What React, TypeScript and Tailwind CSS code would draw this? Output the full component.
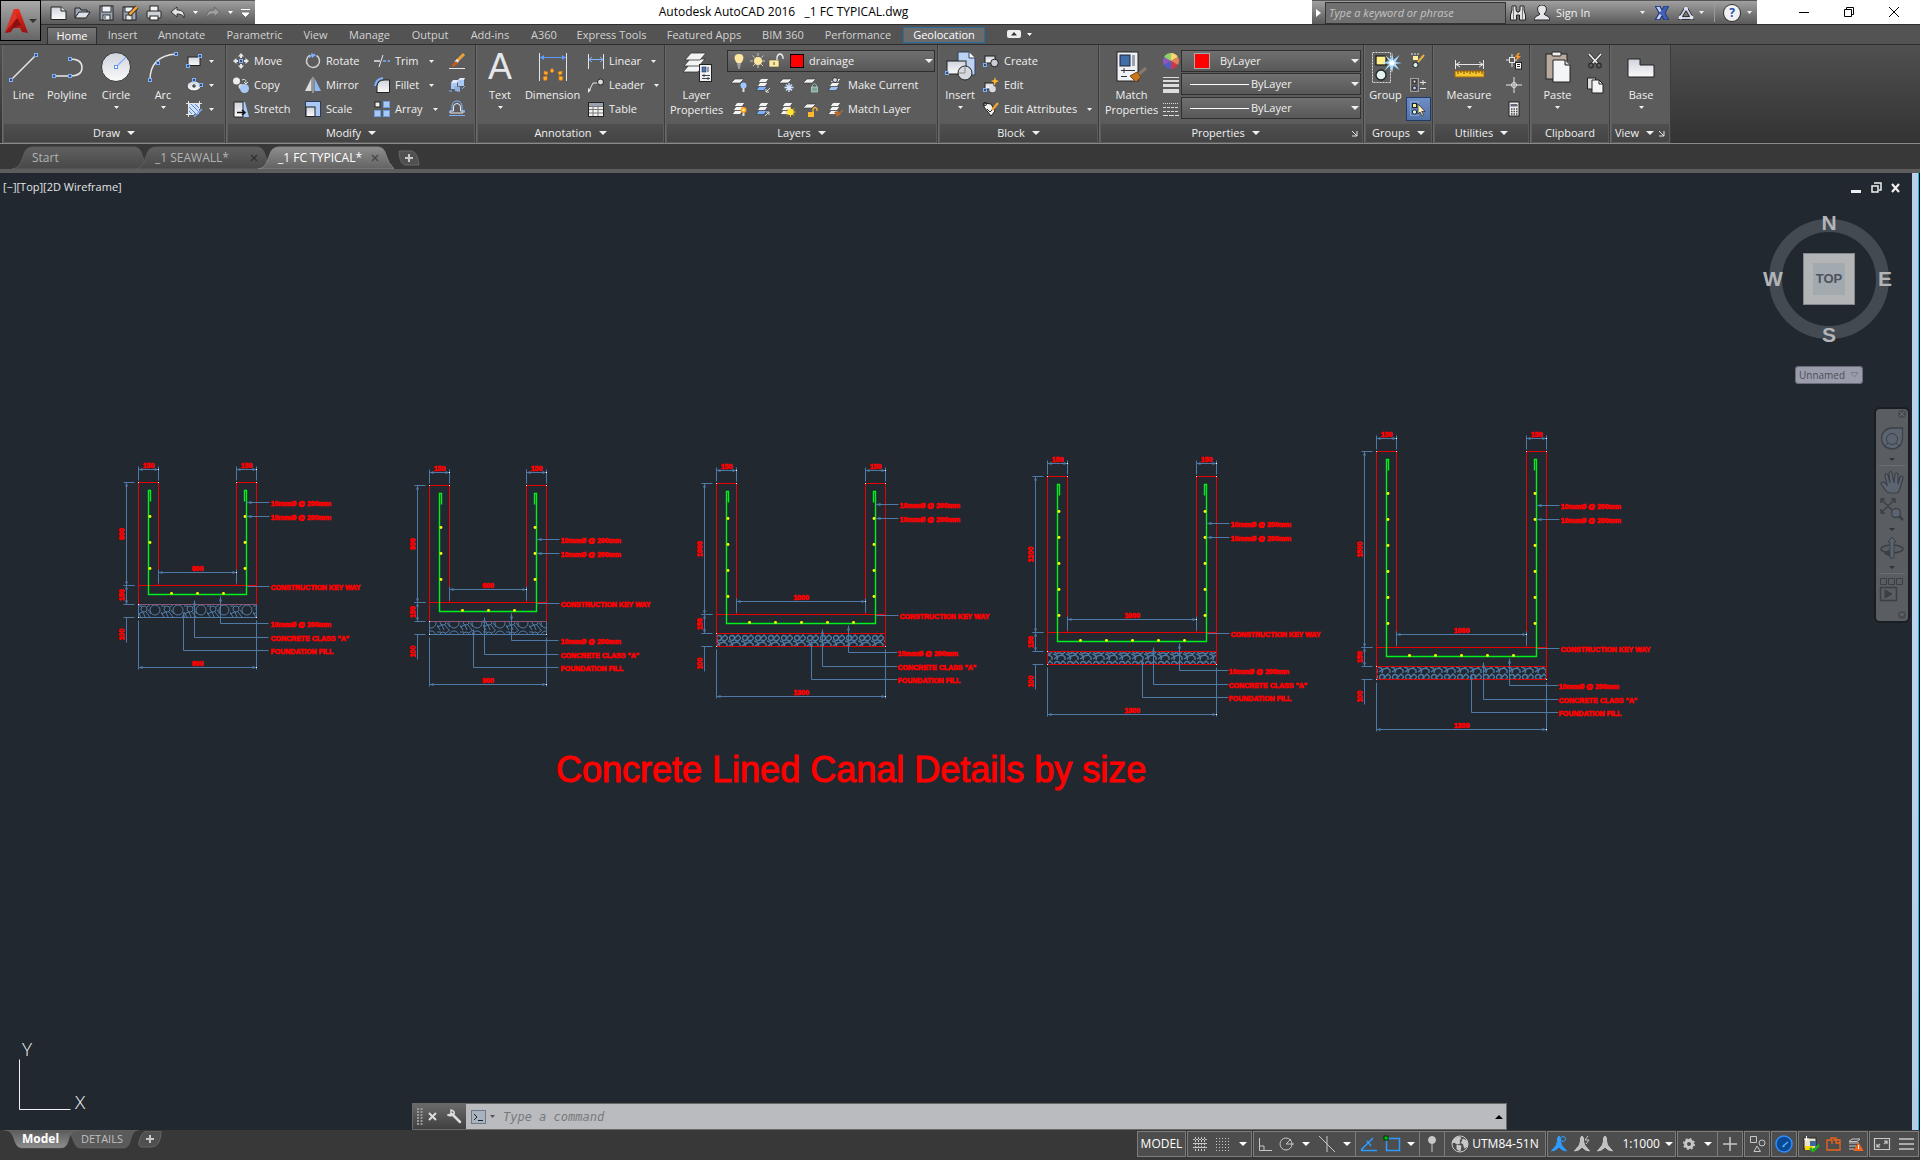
import type { ReactNode } from "react";

const LIGHT = "#e6e6e6";
const BLUE = "#7db0ff";
const DIM = "#4f7aa6";

function Caret({ className = "" }: { className?: string }) {
  return (
    <svg width="8" height="4" viewBox="0 0 8 4" className={`shrink-0 ${className}`} aria-hidden="true">
      <path d="M0 0h8L4 4z" fill="currentColor" />
    </svg>
  );
}

function SmallCaret({ className = "" }: { className?: string }) {
  return (
    <svg width="5" height="3" viewBox="0 0 5 3" className={`shrink-0 ${className}`} aria-hidden="true">
      <path d="M0 0h5L2.5 3z" fill="currentColor" />
    </svg>
  );
}

const Node = ({ x, y }: { x: number; y: number }) => (
  <rect x={x - 1.5} y={y - 1.5} width="3" height="3" fill="#3c4d66" stroke={BLUE} />
);

const Sheets = ({ fill = "#f2f2f2", last = fill }: { fill?: string; last?: string }) => (
  <g stroke="#333" strokeWidth="0.6">
    <path d="M4 9.5h8l-3 4H1z" fill={last} />
    <path d="M5 5.5h8l-3 4H2z" fill={fill} />
    <path d="M6 1.5h8l-3 4H3z" fill={fill} />
  </g>
);

const small: Record<string, ReactNode> = {
  rectangle: (
    <>
      <rect x="2" y="4" width="12" height="8.500" fill="url(#sheen)" stroke="#222" />
      <Node x={2} y={13} />
      <Node x={14} y={3} />
    </>
  ),
  ellipse: (
    <>
      <ellipse cx="8" cy="9" rx="7" ry="5" fill="url(#sheen)" stroke="#444" />
      <path d="M6 9h4M8 7v4" stroke="#222" />
      <Node x={8} y={3} />
      <Node x={15} y={8} />
    </>
  ),
  hatch: (
    <>
      <rect x="3" y="3" width="10" height="10" fill="#cfe0f8" />
      <path d="M3 6l7 7M3 10l3 3M5 3l8 8M9 3l4 4" stroke="#5a86c8" />
      <path d="M0 2.500h16M2.500 0v16M0 13.500h8M13.500 0v8" stroke={LIGHT} />
      <path d="M16 8L8 16" stroke={BLUE} strokeWidth="1.500" />
    </>
  ),
  move: (
    <>
      <path d="M8 0l3 3.500H9V5H7V3.500H5zM8 16l3-3.500H9V11H7v1.500H5zM0 8l3.500-3v2H5v2H3.500v2zM16 8l-3.500-3v2H11v2h1.500v2z" fill={LIGHT} />
      <Node x={8} y={8} />
    </>
  ),
  copy: (
    <>
      <circle cx="3.500" cy="4" r="3.500" fill="#eee" />
      <path d="M9 3c3-1.500 4 0 4 2.500M11 5l2 2 2-2" fill="none" stroke={LIGHT} />
      <circle cx="8" cy="9.500" r="2.500" fill="#ddd" />
      <circle cx="11.500" cy="11.500" r="4.500" fill="#a9c8f5" />
    </>
  ),
  stretch: (
    <>
      <path d="M9 1h3l4 15H9z" fill="#a9c8f5" />
      <path d="M1 1h9v15H1z" fill="url(#sheen)" stroke="#222" />
      <path d="M4 11.500h7M9 9l3 2.500L9 14" fill="none" stroke="#111" strokeWidth="1.500" />
    </>
  ),
  rotate: (
    <>
      <path d="M11.500 2.500A6.500 6.500 0 1 1 5 2.200" fill="none" stroke="#d0d0d0" strokeWidth="1.500" />
      <path d="M4 4.500A6 6 0 0 1 10 2" fill="none" stroke={BLUE} strokeWidth="1.500" />
      <path d="M6 0l5 2-4 3z" fill={BLUE} />
    </>
  ),
  mirror: (
    <>
      <path d="M6.500 1v13H0z" fill="#ddd" />
      <path d="M9.500 1v13H16z" fill="#8fb8f0" />
      <path d="M8 0v16" stroke="#ccc" />
    </>
  ),
  scale: (
    <>
      <rect x="0.500" y="0.500" width="15" height="15" fill="#a9c8f5" stroke="#2c3e5c" />
      <rect x="1" y="6" width="9" height="9.500" fill="url(#sheen)" stroke="#222" />
    </>
  ),
  trim: (
    <>
      <path d="M0 8h6" stroke={LIGHT} strokeWidth="1.500" />
      <path d="M9 8h7" stroke={BLUE} strokeWidth="1.500" strokeDasharray="3 1.500" />
      <path d="M9 2L5 14" stroke={LIGHT} />
    </>
  ),
  fillet: (
    <>
      <path d="M3 16V9q1-6 7-6h5.500v12.500H3z" fill="url(#sheen)" stroke="#222" />
      <path d="M1 9Q2 2 9 1" fill="none" stroke={BLUE} strokeWidth="2" />
    </>
  ),
  array: (
    <>
      <rect x="1" y="1" width="5" height="5" fill="#eee" stroke="#222" />
      {[[9, 0], [0, 9], [9, 9]].map(([x, y]) => (
        <rect key={`${x}-${y}`} x={x + 0.5} y={y + 0.5} width="6" height="6" fill="#a9c8f5" stroke="#6f9ee0" />
      ))}
    </>
  ),
  erase: (
    <>
      <path d="M15 1L8 8" stroke="#e9a33a" strokeWidth="3" />
      <path d="M9 7l-2.500 2.500" stroke="#eee" strokeWidth="3" />
      <path d="M7 8.500L3 12.500l1 1 4.500-3z" fill="#c8591c" stroke="#c8591c" />
      <path d="M0 15.500h16" stroke={LIGHT} />
    </>
  ),
  explode: (
    <>
      <path d="M2 6h6v6H2zM9 3h6v6H9z" fill="#a9c8f5" />
      <path d="M2 6l2-3h6L8 6zM9 3l2-2h5l-1 2z" fill="#dfe9f8" />
      <path d="M5 9l6 1v5l-5-1z" fill="#8db0e0" />
      <path d="M0 14h3M13 12l3-3" stroke={BLUE} />
    </>
  ),
  offset: (
    <>
      <path d="M5 9V5a3.500 3.500 0 0 1 7 0v4h2.500v2H1.500V9H5z" fill="none" stroke="#eee" transform="translate(-0.500 1)" />
      <path d="M0 14.500h16M1 11.500V9.500h2V5q.5-5 5-5t5 5v4.500h2.500v2" fill="none" stroke={BLUE} />
    </>
  ),
  linear: (
    <>
      <path d="M.5 1v15M15.500 1v15" stroke={LIGHT} />
      <path d="M1 6.500h14M4 4L1 6.500 4 9M12 4l3 2.500L12 9" fill="none" stroke={BLUE} />
    </>
  ),
  leader: (
    <>
      <path d="M1 14L5 6h5" fill="none" stroke={LIGHT} />
      <path d="M0 16V11l3 2z" fill={LIGHT} />
      <circle cx="12.500" cy="5" r="3" fill="#ddd" stroke="#222" />
    </>
  ),
  table: (
    <>
      <rect x="0.500" y="1.500" width="15" height="14" fill="#f0f0f0" stroke="#222" />
      <rect x="1" y="2" width="14" height="3" fill="#9aa2b0" />
      <path d="M1 5.500h14M1 8.500h14M1 12h14M5 5v10M10 5v10" stroke="#777" />
    </>
  ),
  layOff: (
    <>
      <path d="M4 2h9l-4 4H0z" fill="#f2f2f2" stroke="#333" strokeWidth=".6" />
      <circle cx="12.500" cy="8.500" r="3" fill="#9cc8ff" />
      <path d="M12.500 11v4" stroke="#ddd" strokeWidth="2" />
    </>
  ),
  layIso: (
    <>
      <Sheets last="#7db0ff" />
      <path d="M15 11l-4 4M11 12v3h3" stroke="#ddd" fill="none" />
    </>
  ),
  layFreeze: (
    <>
      <path d="M4 2h9l-4 4H0z" fill="#f2f2f2" stroke="#333" strokeWidth=".6" />
      <path d="M10 6v9M5.500 10.500h9M7 7.500l6 6M13 7.500l-6 6" stroke="#cfe4ff" strokeWidth="1.400" />
    </>
  ),
  layLock: (
    <>
      <path d="M4 2h9l-4 4H0z" fill="#f2f2f2" stroke="#333" strokeWidth=".6" />
      <rect x="8.500" y="10" width="6" height="5" fill="#7ba79e" stroke="#c6d9d5" strokeWidth=".7" />
      <path d="M9.500 10V8q2-3 4 0v2" fill="none" stroke="#8fb8b0" />
    </>
  ),
  layCurrent: (
    <>
      <Sheets last="#9cc2f5" />
      <circle cx="8" cy="3" r="2.500" fill="#ccd4e0" stroke="#333" />
    </>
  ),
  layOn: (
    <>
      <Sheets />
      <circle cx="12.500" cy="9" r="3" fill="#ffa41c" />
      <circle cx="12.500" cy="9" r="1.300" fill="#fff0b0" />
      <path d="M12.500 12v3" stroke="#ddd" strokeWidth="2" />
    </>
  ),
  layUniso: (
    <>
      <Sheets last="#7db0ff" />
      <path d="M10 15l4-4M11 11h3v3" stroke="#ddd" fill="none" />
    </>
  ),
  layThaw: (
    <>
      <Sheets />
      <path d="M11.500 6v10M6.500 11h10M8 7.500l7 7M15 7.500l-7 7" stroke="#ffc21a" />
      <circle cx="11.500" cy="11" r="3.200" fill="#ffe437" />
    </>
  ),
  layUnlock: (
    <>
      <path d="M4 3h9l-4 4H0z" fill="#f2f2f2" stroke="#333" strokeWidth=".6" />
      <rect x="5" y="11" width="6" height="5" fill="#ffb82e" />
      <path d="M10 11V8q2-3 4 0v2" fill="none" stroke="#ffb82e" strokeWidth="1.300" />
    </>
  ),
  layMatch: (
    <>
      <Sheets />
      <path d="M7 11l4-1 3 3-4 3z" fill="#b5692c" />
      <path d="M13 12l3-3" stroke="#8a6a50" strokeWidth="2" />
    </>
  ),
  blockCreate: (
    <>
      <rect x="2" y="3" width="10" height="7" fill="url(#sheen)" stroke="#222" />
      <circle cx="11.500" cy="10" r="3.800" fill="#c9ccd6" stroke="#222" />
      <Node x={2} y={12} />
    </>
  ),
  blockEdit: (
    <>
      <rect x="2" y="6" width="9" height="6" fill="url(#sheen)" stroke="#222" />
      <circle cx="9.500" cy="12" r="3.300" fill="#d9dbe2" />
      <path d="M12 0l1 3 3 1-3 1.500L11 9l0-3.500L8 4l3-1z" fill="#ffb42a" />
      <Node x={2} y={13} />
    </>
  ),
  blockAttr: (
    <>
      <path d="M1 2v4l7 9 4-5-4-7z" fill="#f1f1f1" stroke="#222" />
      <path d="M4 8l3 3 4-4" fill="none" stroke="#222" />
      <path d="M9 9l6-7" stroke="#e9a33a" strokeWidth="2.500" />
      <circle cx="2" cy="3" r="1.500" fill="none" stroke="#222" />
    </>
  ),
  wheel: (
    <>
      <path d="M8 8V0a8 8 0 0 1 6.900 4z" fill="#f5d76e" />
      <path d="M8 8l6.900-4a8 8 0 0 1 0 8z" fill="#e87f5a" />
      <path d="M8 8l6.900 4A8 8 0 0 1 8 16z" fill="#c9394a" />
      <path d="M8 8v8a8 8 0 0 1-6.900-4z" fill="#4a5fc9" />
      <path d="M8 8l-6.900 4a8 8 0 0 1 0-8z" fill="#8f57c0" />
      <path d="M8 8L1.100 4A8 8 0 0 1 8 0z" fill="#8fd06a" />
    </>
  ),
  weights: (
    <>
      <path d="M0 .5h16" stroke="#ddd" />
      <path d="M0 4h16" stroke="#ddd" strokeWidth="2" />
      <path d="M0 8.500h16" stroke="#ddd" strokeWidth="3" />
      <path d="M0 14h16" stroke="#ddd" strokeWidth="4" />
    </>
  ),
  linetypes: (
    <>
      <path d="M0 2.500h16" stroke="#ddd" strokeDasharray="1 1" />
      <path d="M0 6.500h16M0 10.500h16" stroke="#ddd" strokeDasharray="3 1" />
      <path d="M0 14.500h16" stroke="#ddd" strokeDasharray="5 1" />
    </>
  ),
  groupEdit: (
    <>
      <path d="M1 1h9" stroke={LIGHT} strokeDasharray="2 1" />
      <rect x="3" y="3" width="5" height="4" fill="#ffef9a" />
      <circle cx="5.500" cy="12" r="2.600" fill="#d9ecef" stroke="#222" />
      <path d="M8 9l6-7" stroke="#e9b13a" strokeWidth="2" />
    </>
  ),
  ungroup: (
    <>
      <rect x="0.500" y="1.500" width="8" height="13" fill="none" stroke={LIGHT} strokeDasharray="1 1" />
      <rect x="3" y="3" width="3" height="3" fill="#eee" stroke="#222" />
      <circle cx="4.500" cy="11" r="2" fill="#a9c8f5" stroke="#222" />
      <path d="M10 5.500h6M13 3v5M10 11.500h6" stroke={LIGHT} />
    </>
  ),
  groupSel: (
    <>
      <rect x="0.500" y="0.500" width="8" height="14" fill="none" stroke="#9fc4ff" strokeDasharray="1 1" />
      <rect x="2.500" y="2.500" width="4" height="4" fill="#ffef9a" stroke="#222" />
      <circle cx="4.500" cy="11" r="2.200" fill="#d9ecef" stroke="#222" />
      <path d="M8 3v10l2-2 2 4 1.500-1-1.800-3.500H15z" fill="#fff3b8" stroke="#222" strokeWidth=".7" />
    </>
  ),
  quickSel: (
    <>
      <path d="M0 7h11M6 1v13" stroke={LIGHT} />
      <rect x="3.500" y="4.500" width="5" height="5" fill="#5c5c5c" stroke={LIGHT} />
      <path d="M12 0l-3 4h2l-1 4 5-5h-3l2-3z" fill="#ff9a1c" />
      <rect x="9.500" y="9.500" width="6" height="6.500" fill="#fff" stroke="#222" />
      <path d="M11 11.500h3M11 13.500h3" stroke="#222" />
    </>
  ),
  point: (
    <>
      <path d="M0 8h16M8 0v16" stroke={LIGHT} />
      <circle cx="8" cy="8" r="2.500" fill="none" stroke={LIGHT} />
    </>
  ),
  calc: (
    <>
      <rect x="3" y="1" width="10" height="14" fill="#eee" stroke="#222" />
      <rect x="4.500" y="3" width="7" height="2.500" fill="#667" />
      <path d="M5 8h7M5 10.500h7M5 13h7" stroke="#444" strokeDasharray="1.500 1" strokeWidth="1.300" />
    </>
  ),
  cut: (
    <>
      <path d="M2 1l9 10M14 1L5 11" stroke="#222" strokeWidth="3" />
      <path d="M2 1l9 10M14 1L5 11" stroke="#eee" strokeWidth="1.800" />
      <circle cx="4" cy="12.500" r="2.300" fill="none" stroke="#2d2d2d" strokeWidth="1.300" />
      <circle cx="12" cy="12.500" r="2.300" fill="none" stroke="#2d2d2d" strokeWidth="1.300" />
    </>
  ),
  pages: (
    <>
      <path d="M.5 1h8v11h-8z" fill="#ddd" stroke="#222" />
      <path d="M5 3h7l4 4v9H5z" fill="#f4f4f4" stroke="#222" />
      <path d="M12 3v4h4" fill="none" stroke="#222" />
    </>
  ),
  new: (
    <>
      <path d="M1 2h10l5 4v8.500H1z" fill="url(#sheen)" stroke="#222" />
      <path d="M11 2v4h5" fill="#ddd" stroke="#222" />
    </>
  ),
  open: (
    <>
      <path d="M1 13V3h5l1 2h6v3" fill="#9aa4b5" stroke="#222" />
      <path d="M1 13l4-6h11l-4 6z" fill="#dde2ea" stroke="#222" />
    </>
  ),
  save: (
    <>
      <rect x="2" y="1" width="13" height="14" fill="#9aa6b8" stroke="#222" />
      <rect x="4" y="1" width="9" height="6" fill="#eef1f5" stroke="#333" />
      <rect x="5" y="10" width="7" height="5" fill="#eee" stroke="#333" />
      <path d="M7 11v3" stroke="#333" />
    </>
  ),
  saveAs: (
    <>
      <rect x="1" y="2" width="13" height="13" fill="#9aa6b8" stroke="#222" />
      <rect x="3" y="2" width="8" height="5" fill="#eef1f5" stroke="#333" />
      <rect x="4" y="10" width="6" height="5" fill="#eee" stroke="#333" />
      <path d="M7 10l8-8" stroke="#222" strokeWidth="4" />
      <path d="M7.500 9.500L15 2" stroke="#f2a23a" strokeWidth="2.500" />
    </>
  ),
  print: (
    <>
      <rect x="4" y="1" width="8" height="6" fill="#f4f4f4" stroke="#222" />
      <rect x="1" y="6" width="14" height="7" rx="1" fill="#cfd3da" stroke="#222" />
      <rect x="4" y="11" width="8" height="4" fill="#fff" stroke="#222" />
    </>
  ),
  undo: <path d="M7 2v3c5 0 8 2 7 8-1-3-3-4-7-4v3L1 7z" fill="#e4e4e4" stroke="#333" />,
  redo: <path d="M9 2v3c-5 0-8 2-7 8 1-3 3-4 7-4v3l6-5z" fill="#9c9c9c" stroke="#666" />,
};

const big: Record<string, ReactNode> = {
  line: (
    <>
      <path d="M3 29L28 4" stroke={LIGHT} strokeWidth="1.500" />
      <Node x={3} y={29} />
      <Node x={28} y={4} />
    </>
  ),
  polyline: (
    <>
      <path d="M3 25h16q12 0 12-8.500T19 8" fill="none" stroke={LIGHT} strokeWidth="1.500" />
      <Node x={3} y={25} />
      <Node x={19} y={25} />
      <Node x={19} y={8} />
    </>
  ),
  circle: (
    <>
      <circle cx="16" cy="16" r="14.500" fill="url(#sheen)" stroke="#333" />
      <path d="M16 16L26 6" stroke={BLUE} strokeWidth="1.300" />
      <rect x="14.500" y="14.500" width="3" height="3" fill="#fff" stroke="#5c93ee" />
    </>
  ),
  arc: (
    <>
      <path d="M3 29Q3 5 29 3" fill="none" stroke={LIGHT} strokeWidth="1.500" />
      <Node x={3} y={29} />
      <Node x={11} y={12} />
      <Node x={29} y={3} />
    </>
  ),
  dimension: (
    <>
      <path d="M2.500 2v28M29.500 2v28" stroke={LIGHT} />
      <path d="M3 6.500h26" stroke="#5c9cff" />
      <path d="M7 4L3 6.500 7 9zM25 4l4 2.500L25 9z" fill="#5c9cff" />
      <path d="M15 17l2 3-2 2-2-2zM7 20l4 1-1 3-3-1zM25 20l-4 1 1 3 3-1zM6 26l4-1v4l-3 .5zM26 26l-4-1v4l3 .5z" fill="#ffb12a" stroke="#e07310" strokeWidth=".6" />
    </>
  ),
  layers: (
    <>
      <g fill="#f4f4f4" stroke="#333" strokeWidth=".8">
        <path d="M8 14h15l-6 7H2z" />
        <path d="M9 8h15l-6 7H3z" />
        <path d="M10 2h15l-6 7H4z" />
      </g>
      <rect x="18.500" y="13.500" width="12" height="17" fill="#eef1f6" stroke="#222" />
      <rect x="21" y="16" width="4" height="5" fill="#4a78b8" stroke="#223" strokeWidth=".5" />
      <path d="M27 16v5M21 24.500h8M21 27.500h8M23 23v3M27 26v3" stroke="#444" />
    </>
  ),
  insert: (
    <>
      <path d="M14 1h11l6 6v17H14z" fill="#bcd2f2" stroke="#2c3e5c" />
      <path d="M25 1v6h6" fill="#fff" stroke="#2c3e5c" />
      <rect x="3" y="10" width="19" height="13" fill="url(#sheen)" stroke="#222" />
      <circle cx="21" cy="22" r="7" fill="#d6d8df" stroke="#222" />
      <path d="M15 22h6v-7" fill="none" stroke="#888" />
      <Node x={3} y={22} />
    </>
  ),
  match: (
    <>
      <rect x="1" y="1" width="21" height="29" fill="#eef1f6" stroke="#222" />
      <rect x="4" y="4" width="10" height="11" fill="#3f6da8" stroke="#223" />
      <rect x="16" y="4" width="3" height="11" fill="#9aa2b0" />
      <path d="M5 19.500h14M5 25.500h6M8 17v5" stroke="#333" />
      <path d="M14 25l7-4 4 5-5 5z" fill="#c7771e" stroke="#7a4412" />
      <path d="M23 23l7-6" stroke="#8a7a6c" strokeWidth="3" />
    </>
  ),
  group: (
    <>
      <rect x="2.500" y="1.500" width="18" height="30" fill="none" stroke="#ddd" strokeDasharray="2 1" />
      <rect x="6" y="5" width="10" height="9" fill="#ffef8a" stroke="#222" strokeWidth="1.300" />
      <circle cx="11" cy="24" r="5" fill="#e3f2f0" stroke="#222" strokeWidth="1.300" />
      <path d="M22 1l1.500 8 6-5-4 7 6.500 1-6.500 1 4 6-6-4-1.500 7-2-7-6 5 5-7-7-1 7-2-4-6 6 5z" fill="#a8dcff" />
      <circle cx="22" cy="12" r="2.500" fill="#fff" />
    </>
  ),
  measure: (
    <>
      <path d="M2.500 9v9M30.500 9v9M3 13.500h27M7 11l-4 2.500L7 16M26 11l4 2.500L26 16" fill="none" stroke={LIGHT} />
      <rect x="2" y="20" width="29" height="6" fill="#f5c62c" stroke="#a5650c" />
      <path d="M5 20v3M8 20v2M11 20v3M14 20v2M17 20v3M20 20v2M23 20v3M26 20v2M29 20v3" stroke="#7a4c08" />
    </>
  ),
  paste: (
    <>
      <rect x="4" y="3" width="21" height="25" fill="#b9aa9e" stroke="#222" />
      <rect x="10" y="1" width="9" height="4" rx="1" fill="#f0f0f0" stroke="#222" />
      <path d="M11 9h12l5 5v17H11z" fill="#f4f5f7" stroke="#222" />
      <path d="M23 9v5h5" fill="#ccc" stroke="#222" />
    </>
  ),
  base: <path d="M3 8h12v6h14v12H3z" fill="url(#sheen)" stroke="#222" />,
};

function Glyph({ name }: { name: string }) {
  return (
    <svg width="16" height="16" viewBox="0 0 16 16" className="shrink-0 overflow-visible" aria-hidden="true">
      {small[name]}
    </svg>
  );
}

function Tool({ icon, label, menu }: { icon: string; label?: string; menu?: boolean }) {
  return (
    <button type="button" aria-label={label ?? icon} className="flex h-6 items-center gap-[5px] whitespace-nowrap">
      <Glyph name={icon} />
      {label}
      {menu && <SmallCaret className={label ? "ml-[5px]" : "ml-[2px]"} />}
    </button>
  );
}

function BigTool({ icon, lines, menu, width }: { icon: string; lines: string[]; menu?: boolean; width: string }) {
  return (
    <button type="button" className={`flex shrink-0 flex-col items-center pt-[6px] leading-[15px] ${width}`}>
      {icon === "text" ? (
        <span className="mb-1 h-8 font-['Liberation_Sans',sans-serif] text-[36px] leading-8 text-gray-200">A</span>
      ) : (
        <svg width="32" height="32" viewBox="0 0 32 32" className="mb-1 shrink-0" aria-hidden="true">
          {big[icon]}
        </svg>
      )}
      {lines.map((line) => (
        <span key={line} className="whitespace-nowrap">
          {line}
        </span>
      ))}
      {menu && <SmallCaret className="mt-1" />}
    </button>
  );
}

function Panel({
  title,
  width,
  menu = true,
  launcher,
  children,
}: {
  title: string;
  width: string;
  menu?: boolean;
  launcher?: boolean;
  children: ReactNode;
}) {
  return (
    <section className={`flex shrink-0 flex-col border-r border-l border-r-[#3c3c3c] border-l-[#6a6a6a] bg-[#5c5c5c] ${width}`}>
      <div className="flex h-[79px]">{children}</div>
      <div
        className={`relative mx-px flex h-[18px] items-center justify-center gap-[7px] bg-linear-to-b from-[#4f4f4f] to-[#444] ${launcher ? "pr-3" : ""}`}
      >
        {title}
        {menu && <Caret />}
        {launcher && (
          <svg width="7" height="7" viewBox="0 0 7 7" className="absolute right-1 bottom-[5px]" aria-hidden="true">
            <path d="M1 1l5 5M6 1v5H1" fill="none" stroke={LIGHT} />
          </svg>
        )}
      </div>
    </section>
  );
}

function Combo({ label, value, kind }: { label: string; value: string; kind: "color" | "line" }) {
  return (
    <div className="relative flex h-[22px] w-[180px] items-center border border-[#2f2f2f] bg-linear-to-b from-[#707070] to-[#585858]">
      {kind === "color" ? (
        <span className="ml-3 h-4 w-4 shrink-0 border border-[#aaa] bg-[#ff0000]" />
      ) : (
        <span className="ml-2 h-px w-[59px] shrink-0 bg-white" />
      )}
      <select
        aria-label={label}
        className={`min-w-0 flex-1 appearance-none bg-transparent outline-none ${kind === "color" ? "pl-[10px]" : "pl-[2px]"}`}
      >
        <option>{value}</option>
      </select>
      <Caret className="absolute right-[1px]" />
    </div>
  );
}

const tabs = [
  ["Insert", "w-[49px]"],
  ["Annotate", "w-[69px]"],
  ["Parametric", "w-[77px]"],
  ["View", "w-[45px]"],
  ["Manage", "w-[63px]"],
  ["Output", "w-[58px]"],
  ["Add-ins", "w-[62px]"],
  ["A360", "w-[46px]"],
  ["Express Tools", "w-[89px]"],
  ["Featured Apps", "w-[96px]"],
  ["BIM 360", "w-[62px]"],
  ["Performance", "w-[88px]"],
];

function TitleBar() {
  return (
    <header className="flex h-6 shrink-0 bg-white">
      <div className="flex w-[255px] shrink-0 items-center border-t border-[#555] bg-linear-to-b from-[#a0a0a0] to-[#5a5a5a] pl-[50px] text-white">
        <div className="flex gap-2">
          {["new", "open", "save", "saveAs", "print", "undo"].map((name) => (
            <button key={name} type="button" aria-label={name}>
              <Glyph name={name} />
            </button>
          ))}
        </div>
        <SmallCaret className="ml-[7px]" />
        <button type="button" aria-label="redo" className="ml-[7px]">
          <Glyph name="redo" />
        </button>
        <SmallCaret className="ml-[7px]" />
        <svg width="9" height="8" viewBox="0 0 9 8" className="ml-[8px]" aria-hidden="true">
          <path d="M0 .5h9M1 4h7L4.500 7.500z" fill="#fff" stroke="#fff" />
        </svg>
      </div>
      <h1 className="flex-1 text-center text-[12px] leading-6 whitespace-pre text-black">
        Autodesk AutoCAD 2016{"   "}_1 FC TYPICAL.dwg
      </h1>
      <div className="flex w-[445px] shrink-0 items-center border-t border-[#555] bg-linear-to-b from-[#a0a0a0] to-[#5a5a5a]">
        <div className="flex h-full w-[13px] items-center justify-center">
          <svg width="5" height="8" viewBox="0 0 5 8" aria-hidden="true">
            <path d="M0 0v8l5-4z" fill="#fff" />
          </svg>
        </div>
        <input
          aria-label="Search"
          placeholder="Type a keyword or phrase"
          className="h-[22px] w-[181px] border border-[#333] bg-[#6f6f6f] px-[3px] italic outline-none placeholder:text-[#c4c4c4]"
        />
        <svg width="16" height="16" viewBox="0 0 16 16" className="ml-1" aria-hidden="true">
          <path d="M2 1h4v4l1 2h2l1-2V1h4v4l1.500 5v5H9.500v-5h-3v5H.5v-5L2 5z" fill="#e4e4e4" stroke="#222" />
          <path d="M3.500 2v12M12.500 2v12" stroke="#777" />
        </svg>
        <svg width="16" height="16" viewBox="0 0 16 16" className="ml-2" aria-hidden="true">
          <path d="M8 0c6 0 5 7 2 9 1 2 5 1 6 6H0c1-5 5-4 6-6C3 7 2 0 8 0z" fill="#e4e6ea" stroke="#222" />
        </svg>
        <a href="#signin" className="ml-[6px] w-[84px]">
          Sign In
        </a>
        <SmallCaret />
        <svg width="14" height="14" viewBox="0 0 14 14" className="ml-[10px]" aria-hidden="true">
          <path d="M0 0h5l2 4 2-4h5l-4 7 4 7H9l-2-4-2 4H0l4-7z" fill="#3f5fb8" stroke="#1c2a60" strokeWidth=".8" />
          <path d="M1.500 1h3l2 4-2 1zM1.500 13h3l2-4-2-1z" fill="#c6d4f4" />
        </svg>
        <svg width="16" height="14" viewBox="0 0 16 14" className="ml-[9px]" aria-hidden="true">
          <path d="M8 2L2 12h12z" fill="none" stroke="#222" strokeWidth="3.500" />
          <path d="M8 2L2 12h12z" fill="none" stroke="#c9d2e8" strokeWidth="2" />
          <circle cx="8" cy="2.500" r="2" fill="#dfe5f2" />
          <circle cx="2.500" cy="11.500" r="2" fill="#dfe5f2" />
          <circle cx="13.500" cy="11.500" r="2" fill="#dfe5f2" />
        </svg>
        <SmallCaret className="ml-[5px]" />
        <span className="ml-[10px] h-[18px] w-px bg-[#9a9a9a]" />
        <button
          type="button"
          aria-label="Help"
          className="ml-[9px] flex h-4 w-4 items-center justify-center rounded-full bg-[#f0f0f0] text-[12px] leading-4 font-bold text-[#1c4fb0] ring-1 ring-[#333]"
        >
          ?
        </button>
        <SmallCaret className="ml-[7px]" />
      </div>
      <div className="flex w-[163px] shrink-0 items-center text-black">
        {["M0 5.500h10", "M.5 2.500h7v7h-7zM2.500 2V.5h7v7h-2", "M0 0l10 10M10 0L0 10"].map((d) => (
          <button key={d} type="button" aria-label="window control" className="flex w-[45px] justify-center first:ml-6">
            <svg width="10" height="10" viewBox="0 0 10 10" aria-hidden="true">
              <path d={d} fill="none" stroke="#000" />
            </svg>
          </button>
        ))}
      </div>
    </header>
  );
}

function RibbonTabs() {
  return (
    <nav className="flex h-[21px] shrink-0 items-end border-t border-b border-t-[#2e2e2e] border-b-[#2e2e2e] bg-[#535353] pl-[47px] text-[#d2d2d2]">
      <a
        href="#home"
        className="mr-px flex h-[17px] w-[50px] items-center justify-center border border-b-0 border-[#2e2e2e] bg-linear-to-b from-[#767676] to-[#5c5c5c] pb-px text-white"
      >
        Home
      </a>
      {tabs.map(([name, width]) => (
        <a key={name} href="#tab" className={`flex h-[17px] items-center justify-center pb-px whitespace-nowrap ${width}`}>
          {name}
        </a>
      ))}
      <a
        href="#geo"
        className="mb-px ml-px flex h-4 w-[82px] items-center justify-center border border-[#2a6f9c] bg-[#6b6b6b] pb-px text-white"
      >
        Geolocation
      </a>
      <button type="button" aria-label="Minimize ribbon" className="mb-[6px] ml-[22px] flex items-center gap-[6px] text-white">
        <svg width="14" height="8" viewBox="0 0 14 8" aria-hidden="true">
          <rect width="14" height="8" rx="2" fill="#eee" />
          <path d="M7 2l3 3.500H4z" fill="#333" />
        </svg>
        <SmallCaret />
      </button>
    </nav>
  );
}

function LayerCombo() {
  return (
    <div className="relative mt-[5px] flex h-[22px] w-[208px] items-center border border-[#2f2f2f] bg-linear-to-b from-[#707070] to-[#585858] pl-[6px]">
      <svg width="10" height="16" viewBox="0 0 10 16" aria-hidden="true">
        <path d="M5 1c6 0 5 6 2 9H3C0 7-1 1 5 1z" fill="#ffe9a0" />
        <path d="M3 11h4M3.500 13h3M4 15h2" stroke="#ddd" />
      </svg>
      <svg width="16" height="16" viewBox="0 0 16 16" className="ml-[6px]" aria-hidden="true">
        <path d="M8 0v16M0 8h16M2.500 2.500l11 11M13.500 2.500l-11 11" stroke="#cfc7b2" strokeDasharray="3 1" />
        <circle cx="8" cy="8" r="4" fill="#ffe9a0" />
      </svg>
      <svg width="16" height="16" viewBox="0 0 16 16" className="ml-[2px]" aria-hidden="true">
        <rect x="1" y="7" width="10" height="7" fill="#ffe9a0" stroke="#554" strokeWidth=".6" />
        <path d="M9 7V4q1-3 3-3t3 3v2" fill="none" stroke="#eee" strokeWidth="1.300" />
        <path d="M6 9v3" stroke="#554" />
      </svg>
      <span className="ml-[6px] h-[14px] w-[14px] shrink-0 border border-black bg-[#ff0000]" />
      <select aria-label="Layer" className="ml-[5px] min-w-0 flex-1 appearance-none bg-transparent outline-none">
        <option>drainage</option>
      </select>
      <Caret className="absolute right-[1px]" />
    </div>
  );
}

function Ribbon() {
  return (
    <div className="flex h-[99px] shrink-0 border-b border-[#8a8a8a] bg-linear-to-b from-[#505050] to-[#333] pl-[2px] text-[#f0f0f0]">
      <Panel title="Draw" width="w-[224px]">
        <BigTool icon="line" lines={["Line"]} width="w-[41px]" />
        <BigTool icon="polyline" lines={["Polyline"]} width="w-[46px]" />
        <BigTool icon="circle" lines={["Circle"]} menu width="w-[52px]" />
        <BigTool icon="arc" lines={["Arc"]} menu width="w-[42px]" />
        <div className="ml-[2px] pt-1">
          {["rectangle", "ellipse", "hatch"].map((name) => (
            <Tool key={name} icon={name} menu />
          ))}
        </div>
      </Panel>
      <Panel title="Modify" width="w-[250px]">
        <div className="grid grid-cols-[72px_69px_75px_16px] content-start pt-1 pl-[6px]">
          <Tool icon="move" label="Move" />
          <Tool icon="rotate" label="Rotate" />
          <Tool icon="trim" label="Trim" menu />
          <Tool icon="erase" />
          <Tool icon="copy" label="Copy" />
          <Tool icon="mirror" label="Mirror" />
          <Tool icon="fillet" label="Fillet" menu />
          <Tool icon="explode" />
          <Tool icon="stretch" label="Stretch" />
          <Tool icon="scale" label="Scale" />
          <Tool icon="array" label="Array" menu />
          <Tool icon="offset" />
        </div>
      </Panel>
      <Panel title="Annotation" width="w-[189px]">
        <BigTool icon="text" lines={["Text"]} menu width="w-[46px]" />
        <BigTool icon="dimension" lines={["Dimension"]} width="w-[59px]" />
        <div className="ml-[6px] pt-1">
          <Tool icon="linear" label="Linear" menu />
          <Tool icon="leader" label="Leader" menu />
          <Tool icon="table" label="Table" />
        </div>
      </Panel>
      <Panel title="Layers" width="w-[273px]">
        <BigTool icon="layers" lines={["Layer", "Properties"]} width="w-[61px]" />
        <div>
          <LayerCombo />
          <div className="mt-px flex gap-2 pl-1">
            {["layOff", "layIso", "layFreeze", "layLock"].map((name) => (
              <Tool key={name} icon={name} />
            ))}
            <Tool icon="layCurrent" label="Make Current" />
          </div>
          <div className="flex gap-2 pl-1">
            {["layOn", "layUniso", "layThaw", "layUnlock"].map((name) => (
              <Tool key={name} icon={name} />
            ))}
            <Tool icon="layMatch" label="Match Layer" />
          </div>
        </div>
      </Panel>
      <Panel title="Block" width="w-[161px]">
        <BigTool icon="insert" lines={["Insert"]} menu width="w-[42px]" />
        <div className="ml-[2px] pt-1">
          <Tool icon="blockCreate" label="Create" />
          <Tool icon="blockEdit" label="Edit" />
          <Tool icon="blockAttr" label="Edit Attributes" menu />
        </div>
      </Panel>
      <Panel title="Properties" width="w-[265px]" launcher>
        <BigTool icon="match" lines={["Match", "Properties"]} width="w-[63px]" />
        <div className="pt-1">
          {["wheel", "weights", "linetypes"].map((name) => (
            <Tool key={name} icon={name} />
          ))}
        </div>
        <div className="ml-[2px] flex flex-col gap-px pt-[5px]">
          <Combo label="Object color" value="ByLayer" kind="color" />
          <Combo label="Lineweight" value="ByLayer" kind="line" />
          <div className="pt-px">
            <Combo label="Linetype" value="ByLayer" kind="line" />
          </div>
        </div>
      </Panel>
      <Panel title="Groups" width="w-[69px]">
        <BigTool icon="group" lines={["Group"]} width="w-[41px]" />
        <div className="pt-1">
          <div className="pl-1">
            <Tool icon="groupEdit" />
            <Tool icon="ungroup" />
          </div>
          <div className="border border-[#1f3a6b] bg-linear-to-b from-[#6f8fc4] to-[#5272a8] pr-1 pl-[3px]">
            <div className="-my-px">
              <Tool icon="groupSel" />
            </div>
          </div>
        </div>
      </Panel>
      <Panel title="Utilities" width="w-[97px]">
        <BigTool icon="measure" lines={["Measure"]} menu width="w-[70px]" />
        <div className="ml-[2px] pt-1">
          <Tool icon="quickSel" />
          <Tool icon="point" />
          <Tool icon="calc" />
        </div>
      </Panel>
      <Panel title="Clipboard" width="w-[80px]" menu={false}>
        <BigTool icon="paste" lines={["Paste"]} menu width="w-[53px]" />
        <div className="ml-[3px] pt-1">
          <Tool icon="cut" />
          <Tool icon="pages" />
        </div>
      </Panel>
      <Panel title="View" width="w-[61px]" launcher>
        <BigTool icon="base" lines={["Base"]} menu width="w-[60px]" />
      </Panel>
    </div>
  );
}

function FileTab({ name, width, active, closable }: { name: string; width: number; active?: boolean; closable?: boolean }) {
  const w = width + 14;
  return (
    <div className={`relative -mr-px flex h-[25px] items-center pt-[3px] ${active ? "z-10 text-white" : "text-[#b4b4b4]"}`} style={{ width }}>
      <svg width={w} height="25" className="absolute top-0 -left-3" aria-hidden="true">
        <path
          d={`M0 25C8 24 9 18 12 10Q14 3 21 3H${w - 16}Q${w - 10} 3 ${w - 8} 11T${w} 25z`}
          fill={active ? "url(#tabOn)" : "url(#tabOff)"}
          stroke={active ? "#868686" : "#5d5d5d"}
        />
      </svg>
      <a href="#file" className="relative flex-1 pl-2 text-[12px] whitespace-nowrap">
        {name}
      </a>
      {closable && (
        <button type="button" aria-label={`Close ${name}`} className="relative mr-[13px]">
          <svg width="8" height="8" viewBox="0 0 8 8" aria-hidden="true">
            <path d="M1 1l6 6M7 1L1 7" stroke={active ? "#484848" : "#343434"} strokeWidth="1.500" />
          </svg>
        </button>
      )}
    </div>
  );
}

type Canal = {
  x: number;
  right: number;
  top: number;
  floor: number;
  note: number;
  bar: number;
  height: string;
  span: string;
  total: string;
  leaders: number[];
  coarse?: boolean;
};

// y values run from the top of the model space
const canals: Canal[] = [
  { x: 138.5, right: 256.5, top: 309.5, floor: 412.5, note: 329.5, bar: 343.5, height: "800", span: "600", total: "900", leaders: [220.5, 194.5, 183.5], coarse: true },
  { x: 429.5, right: 546.5, top: 312.5, floor: 429.5, note: 366.5, bar: 354.5, height: "900", span: "600", total: "900", leaders: [511.5, 484.5, 473.5], coarse: true },
  { x: 716.5, right: 885.5, top: 310.5, floor: 441.5, note: 331.5, bar: 345.5, height: "1000", span: "1000", total: "1300", leaders: [848.5, 822.5, 811.5] },
  { x: 1047.5, right: 1216.5, top: 303.5, floor: 459.5, note: 350.5, bar: 338.5, height: "1200", span: "1000", total: "1300", leaders: [1179.5, 1153.5, 1142.5] },
  { x: 1376.5, right: 1546.5, top: 278.5, floor: 474.5, note: 332.5, bar: 320.5, height: "1500", span: "1000", total: "1300", leaders: [1509.5, 1483.5, 1471.5] },
];

// lettering is drawn with a heavy pen so it reads at this zoom
const PEN = { stroke: "#ff0000", strokeWidth: 0.6 };

function HDim({ x1, x2, y, tail, text }: { x1: number; x2: number; y: number; tail: number; text: string }) {
  return (
    <>
      <path d={`M${x1} ${y}H${x2}M${x1} ${y - 3}V${y + tail}M${x2} ${y - 3}V${y + tail}`} stroke={DIM} fill="none" />
      <path d={`M${x1} ${y}l4-1.500v3zM${x2} ${y}l-4-1.500v3z`} fill={DIM} />
      <text x={(x1 + x2) / 2} y={y - 2} textAnchor="middle" {...PEN}>
        {text}
      </text>
    </>
  );
}

function VDim({ x, y1, y2, text }: { x: number; y1: number; y2: number; text: string }) {
  const mid = (y1 + y2) / 2;
  return (
    <>
      <path d={`M${x} ${y1}V${y2}M${x - 3} ${y1}h11M${x - 3} ${y2}h11`} stroke={DIM} fill="none" />
      <path d={`M${x} ${y1}l-1.500 4h3zM${x} ${y2}l-1.500-4h3z`} fill={DIM} />
      <text transform={`translate(${x - 3} ${mid}) rotate(-90)`} textAnchor="middle" {...PEN}>
        {text}
      </text>
    </>
  );
}

function CanalSection({ c }: { c: Canal }) {
  const { x, right, top, floor } = c;
  const base = floor + 19;
  const fill = base + 13;
  const inL = x + 20;
  const inR = right - 20;
  const barL = x + 10;
  const barR = right - 10;
  const barY = floor + 9;
  const bars: number[] = [];
  for (let y = c.bar; y <= floor - 16; y += 26) bars.push(y);
  const floorBars: number[] = [];
  for (let bx = x + 33; bx < barR - 8; bx += 26) floorBars.push(bx);
  const notes = ["10mmØ @ 200mm", 'CONCRETE CLASS "A"', "FOUNDATION FILL"];
  const starts = [barY + 2, floor + 15, base + 8];
  const noteY = [floor + 38, floor + 52, floor + 65];

  return (
    <g fontSize="7" fontWeight="700" fill="#ff0000">
      <rect x={x} y={base} width={right - x} height="13" fill={c.coarse ? "url(#rubble)" : "url(#gravel)"} stroke={c.coarse ? DIM : "#e00000"} />
      <path
        d={`M${x} ${base}V${top}H${inL}V${floor}M${inR} ${floor}V${top}H${right}V${base}M${x} ${floor}H${right}`}
        fill="none"
        stroke="#e80000"
      />
      <path d={`M${x} ${base}H${right}`} stroke={c.coarse ? "#8a5577" : "#e00000"} />

      <path
        d={`M${barL + 2} ${top + 19}V${top + 8}H${barL}V${barY}H${barR}V${top + 8}H${barR - 2}V${top + 19}`}
        fill="none"
        stroke="#00f01c"
        strokeWidth="1.400"
      />
      {bars.map((y) => (
        <g key={y} fill="#ffff00">
          <circle cx={barL + 1.5} cy={y} r="1.400" />
          <circle cx={barR - 1.5} cy={y} r="1.400" />
        </g>
      ))}
      {floorBars.map((bx) => (
        <circle key={bx} cx={bx} cy={barY - 1} r="1.400" fill="#ffff00" />
      ))}

      <HDim x1={x} x2={inL} y={top - 13} tail={11} text="150" />
      <HDim x1={inR} x2={right} y={top - 13} tail={11} text="150" />
      <HDim x1={inL} x2={inR} y={floor - 13} tail={11} text={c.span} />
      <path d={`M${x} ${fill + 3}V${floor + 81}M${right} ${fill + 3}V${floor + 81}`} stroke={DIM} />
      <HDim x1={x} x2={right} y={floor + 82} tail={2} text={c.total} />
      <VDim x={x - 12} y1={top} y2={floor} text={c.height} />
      <VDim x={x - 12} y1={floor} y2={base} text="150" />
      <path d={`M${x - 15} ${fill}h11M${x - 12} ${fill}v25`} stroke={DIM} />
      <text transform={`translate(${x - 15} ${fill + 17}) rotate(-90)`} textAnchor="middle" {...PEN}>
        100
      </text>

      {[c.note, c.note + 14].map((y) => (
        <g key={y}>
          <path d={`M${barR} ${y}H${right + 13}`} stroke={DIM} />
          <path d={`M${barR} ${y}l5-1.500v3z`} fill={DIM} />
          <text x={right + 14} y={y + 3} {...PEN}>
            10mmØ @ 200mm
          </text>
        </g>
      ))}
      <path d={`M${barR} ${floor + 1}H${right + 13}`} stroke={DIM} />
      <text x={right + 14} y={floor + 4} {...PEN}>
        CONSTRUCTION KEY WAY
      </text>
      {notes.map((note, i) => (
        <g key={note}>
          <path d={`M${c.leaders[i]} ${starts[i]}V${noteY[i]}H${right + 12}`} fill="none" stroke={DIM} />
          <path d={`M${c.leaders[i]} ${starts[i]}l-1.500 5h3z`} fill={DIM} />
          <text x={right + (c.coarse ? 14 : 12)} y={noteY[i] + 3} {...PEN}>
            {note}
          </text>
        </g>
      ))}
      {[
        [x, top], [inL, top], [inR, top], [right, top], [x, fill], [right, fill], [x, base], [inL, top - 13], [right, top - 13], [inR, floor - 13], [right, floor + 82],
      ].map(([px, py]) => (
        <rect key={`${px}-${py}`} x={px - 0.5} y={py - 0.5} width="1" height="1" fill="#fff" />
      ))}
    </g>
  );
}

function ViewCube() {
  return (
    <svg width="136" height="136" viewBox="0 0 136 136" className="absolute top-[38px] right-[15px]" role="img" aria-label="View cube">
      <circle cx="68" cy="68" r="53.500" fill="none" stroke="#434a52" strokeWidth="13" />
      <rect x="42.500" y="42.500" width="51" height="51" fill="#b2b4b6" stroke="#85888b" />
      <rect x="52" y="52" width="32" height="32" fill="#a2a9af" />
      <g textAnchor="middle" style={{ fontWeight: 700 }}>
        <text x="68" y="72" fontSize="13" fill="#4c535b">
          TOP
        </text>
        <g fontSize="21" fill="#b3b5b8">
          <text x="68" y="19">N</text>
          <text x="68" y="131">S</text>
          <text x="12" y="75">W</text>
          <text x="124" y="75">E</text>
        </g>
      </g>
    </svg>
  );
}

function NavBar() {
  return (
    <div className="absolute top-[236px] right-[4px] rounded bg-[#5a5e62] ring-2 ring-[#191e24]">
      <svg width="32" height="212" viewBox="0 0 32 212" fill="none" stroke="#3b4046" aria-hidden="true">
        <circle cx="26" cy="5" r="4" fill="#484c51" stroke="none" />
        <path d="M24 3l4 4M28 3l-4 4" stroke="#666a6e" />
        <path d="M16 19h10.500v11A10.500 10.500 0 1 1 16 19z" fill="#5c6472" strokeWidth="1.300" />
        <circle cx="16" cy="30" r="5.500" />
        <path d="M12 34l-4 4M20 34l4 4" />
        <path d="M13 49h6l-3 3zM13 119h6l-3 3zM13 157h6l-3 3z" fill="#2f3439" stroke="none" />
        <path d="M3 56.500h26M3 164.500h26" stroke="#6b6f73" />
        <path d="M11 83L5 75q0-3 4-1l2 2-2-10q1-3 3 0l2 8-1-10q2-3 3 0l2 10 1-9q2-2 3 0v10l2-7q3-2 3 1l-3 10q-1 4-3 5H14z" fill="#5c6472" strokeWidth="1.200" />
        <path d="M5 90l14 14M19 90L5 104M5 94v-4h4M15 90h4v4M5 100v4h4" strokeWidth="1.500" />
        <circle cx="20" cy="104" r="4.500" fill="#5c6472" strokeWidth="1.300" />
        <path d="M23 107l4 4" strokeWidth="2.500" />
        <ellipse cx="16" cy="140" rx="11" ry="4" strokeWidth="1.500" />
        <path d="M14 149v-16h-2l4-5 4 5h-2v16z" fill="#5c6472" />
        <path d="M8 144l5-3v6z" fill="#3b4046" />
        <path d="M4.500 169.500h6v6h-6zM12.500 169.500h6v6h-6zM20.500 169.500h6v6h-6z" />
        <path d="M4.500 178.500h16v13h-16z" strokeWidth="1.500" />
        <path d="M9 181v8l7-4z" fill="#3b4046" />
        <circle cx="26" cy="206" r="4" fill="#484c51" stroke="none" />
        <path d="M24 205h4l-2 2z" stroke="#666a6e" />
      </svg>
    </div>
  );
}

function ModelSpace() {
  return (
    <main className="flex min-h-0 flex-1">
      <div className="relative min-w-0 flex-1 overflow-hidden bg-[#212830]">
        <svg className="absolute inset-0 h-full w-full font-['Liberation_Sans',sans-serif]" aria-label="Drawing">
          {canals.map((c) => (
            <CanalSection key={c.x} c={c} />
          ))}
          <text x="556" y="609" fontSize="36" fill="#ff0000" stroke="#ff0000" strokeWidth="1">
            Concrete Lined Canal Details by size
          </text>
        </svg>
        <p className="relative pt-[6px] pl-[3px] text-[#e4e4e4]">[−][Top][2D Wireframe]</p>
        <svg width="54" height="16" viewBox="0 0 54 16" className="absolute top-[7px] right-[10px]" aria-hidden="true">
          <path d="M3 10h10v3H3z" fill="#eee" />
          <path d="M26 3h7v7h-2M24 6h6v6h-6z" fill="none" stroke="#eee" strokeWidth="1.500" />
          <path d="M44 4l7 8M51 4l-7 8" stroke="#eee" strokeWidth="2.200" />
        </svg>
        <div className="font-['Liberation_Sans',sans-serif]">
          <ViewCube />
        </div>
        <button
          type="button"
          className="absolute top-[193px] right-[49px] flex h-[18px] w-[68px] items-center justify-between rounded bg-[#9a9cac] px-1 text-[10px] text-[#4d5059] ring-1 ring-[#6a6c7a] ring-inset"
        >
          Unnamed
          <svg width="9" height="6" viewBox="0 0 9 6" aria-hidden="true">
            <path d="M1 .5h7L4.500 5z" fill="none" stroke="#7b7d8b" />
          </svg>
        </button>
        <NavBar />
        <svg width="80" height="90" viewBox="0 0 80 90" className="absolute bottom-px left-3 overflow-visible" aria-label="UCS icon">
          <path d="M7.500 20.500v50h51" fill="none" stroke="#f0f0f0" />
          <g fill="#f0f0f0" fontSize="19" fontFamily="Open Sans" fontWeight="300" textAnchor="middle">
            <text x="15" y="17">Y</text>
            <text x="68" y="70">X</text>
          </g>
        </svg>
        <div className="absolute right-[405px] bottom-0 left-[412px] flex h-[27px] border border-[#6a6a6a] bg-[#babbbe]">
          <div className="flex w-[53px] shrink-0 items-center bg-linear-to-b from-[#6a6a6a] to-[#404040] pl-1">
            <svg width="6" height="18" viewBox="0 0 6 18" aria-hidden="true">
              <path d="M1 0v18M4.500 0v18" stroke="#999" strokeWidth="2" strokeDasharray="2 1" />
            </svg>
            <button type="button" aria-label="Close command line" className="ml-[5px]">
              <svg width="9" height="9" viewBox="0 0 9 9" aria-hidden="true">
                <path d="M1 1l7 7M8 1L1 8" stroke="#ddd" strokeWidth="2" />
              </svg>
            </button>
            <button type="button" aria-label="Customize" className="ml-[10px]">
              <svg width="15" height="15" viewBox="0 0 15 15" aria-hidden="true">
                <path d="M5 5l8 8" stroke="#ddd" strokeWidth="2.500" strokeLinecap="round" />
                <path d="M4 1q4 1 3 4-2 3-6 1l3-1z" fill="none" stroke="#ddd" strokeWidth="1.500" />
              </svg>
            </button>
          </div>
          <label htmlFor="command" className="flex items-center gap-1 pl-[5px] text-[#555]">
            <svg width="15" height="14" viewBox="0 0 15 14" aria-label="Command">
              <rect x=".5" y=".5" width="14" height="13" fill="#a9b2bf" stroke="#6f7885" />
              <path d="M3 4l3 3-3 3M7 10.500h5" fill="none" stroke="#222" />
            </svg>
            <SmallCaret />
          </label>
          <input
            id="command"
            placeholder="Type a command"
            className="min-w-0 flex-1 bg-transparent pl-[8px] font-['DejaVu_Sans_Mono','Liberation_Mono',monospace] text-[12px] italic outline-none placeholder:text-[#77797d]"
          />
          <Caret className="mt-[11px] mr-[3px] rotate-180 text-black" />
        </div>
      </div>
      <div className="w-[8px] shrink-0 border-r border-black bg-linear-to-b from-[#b9cfec] via-[#bcd2ee] to-[#b5cbe8]">
        <div className="ml-[6px] h-full w-px bg-[#00c8e8]" />
      </div>
    </main>
  );
}

function Cell({ width, children }: { width: string; children: ReactNode }) {
  return (
    <div className={`flex h-[26px] shrink-0 items-center justify-around border border-[#7d7d7d] bg-[#4d4d4d] ${width}`}>{children}</div>
  );
}

function Status({ children, label, w = 18 }: { children: ReactNode; label: string; w?: number }) {
  return (
    <button type="button" aria-label={label}>
      <svg width={w} height="18" viewBox={`0 0 ${w} 18`} fill="none" stroke="#c8c8c8" className="overflow-visible">
        {children}
      </svg>
    </button>
  );
}

const PERSON = "M9 1q2 1 1.500 5l1 4 5 6q-4 0-7.500-4Q5.500 16 1.500 16l5-6 1-4Q7 2 9 1z";

function BottomBar() {
  return (
    <footer className="flex h-[30px] shrink-0 justify-between bg-[#383838] pl-3">
      <div className="flex h-[18px] items-center">
        <a href="#model" className="relative z-10 flex h-[18px] w-[57px] items-center justify-center text-[12px] font-bold text-white">
          <svg width="74" height="19" className="absolute top-0 -left-2 -z-10" aria-hidden="true">
            <path d="M0 0h74c-7 0-8 5-10 12q-2 6-7 6H18q-5 0-7-6C9 5 7 0 0 0z" fill="url(#tabOff2)" stroke="#777" strokeWidth=".5" />
          </svg>
          Model
        </a>
        <a href="#details" className="relative flex h-[18px] w-[66px] items-center justify-center text-[11px] text-[#c0c0c0]">
          <svg width="70" height="19" className="absolute top-0 left-0" aria-hidden="true">
            <path d="M0 0h70c-6 0-7 5-9 12q-2 6-7 6H12q-5 0-7-6z" fill="#5a5a5a" stroke="#707070" strokeWidth=".5" />
          </svg>
          <span className="relative">DETAILS</span>
        </a>
        <button type="button" aria-label="New layout" className="ml-[3px]">
          <svg width="24" height="17" viewBox="0 0 24 17" aria-hidden="true">
            <path d="M8 0h15q0 16-10 16H4q-4 0-3-5Q3 2 8 0z" fill="#505050" stroke="#666" />
            <path d="M12 4v8M8 8h8" stroke="#c8c8c8" strokeWidth="2" />
          </svg>
        </button>
      </div>
      <div className="flex items-start gap-px pt-px pr-px">
        <Cell width="w-[49px]">
          <span className="text-[12px] text-white">MODEL</span>
        </Cell>
        <Cell width="w-[65px]">
          <Status label="Grid" w={14}>
            <path d="M2.500 2v14M5.500 2v14M8.500 2v14M11.500 2v14M0 4.500h14M0 8.500h14M0 12.500h14" strokeDasharray="2 1" />
          </Status>
          <Status label="Snap" w={14}>
            <path d="M0 3.500h14M0 6.500h14M0 9.500h14M0 12.500h14M0 15.500h14" strokeDasharray="1 2" />
          </Status>
          <Caret className="text-white" />
        </Cell>
        <div className="flex -space-x-px">
          <Cell width="w-[103px]">
            <Status label="Ortho" w={14}>
              <path d="M1.500 3v12.500H14M2 11h4v4" />
            </Status>
            <Status label="Polar" w={15}>
              <circle cx="7" cy="9" r="6" />
              <path d="M7 9h8M7 9l5-5" />
            </Status>
            <Caret className="text-white" />
            <Status label="Isometric">
              <path d="M1 1l16 16M9 1v16" />
            </Status>
            <Caret className="text-white" />
          </Cell>
          <Cell width="w-[65px]">
            <Status label="Object tracking" w={17}>
              <path d="M1 15.500h16M1 15L13 3M7 6l4 5" stroke="#2f9bff" strokeWidth="1.500" />
            </Status>
            <Status label="Object snap" w={16}>
              <path d="M2.500 3.500h13v12h-13z" stroke="#2f9bff" strokeWidth="1.500" />
              <rect x="0" y="1" width="4" height="4" fill="#00c800" stroke="#003000" />
            </Status>
            <Caret className="text-white" />
          </Cell>
          <Cell width="w-[26px]">
            <Status label="Pin" w={8}>
              <circle cx="4" cy="5" r="3.500" fill="#c8c8c8" />
              <path d="M4 8v9" />
            </Status>
          </Cell>
          <Cell width="w-[102px]">
            <div className="flex items-center gap-[3px]">
              <Status label="Geographic marker">
                <circle cx="9" cy="9" r="8" />
                <path d="M3 4l4-2 3 1-2 3 1 2-3 1-3-2-2 1zM6 10l4 1-1 5-3-2zM12 4l4 2 .5 5-3 2-1-4-2-1z" fill="#c8c8c8" />
              </Status>
              <span className="text-[12px] text-white">UTM84-51N</span>
            </div>
          </Cell>
        </div>
        <Cell width="w-[129px]">
          <Status label="Annotation visibility">
            <path d={PERSON} fill="#2f9bff" stroke="#2f9bff" />
            <circle cx="13" cy="4" r="2.500" stroke="#2f9bff" fill="#4d4d4d" />
          </Status>
          <Status label="Auto scale">
            <path d={PERSON} fill="#c0c0c0" />
            <path d="M15 1l-3 4h4l-3 4" />
          </Status>
          <Status label="Annotation scale">
            <path d={PERSON} fill="#c0c0c0" />
          </Status>
          <span className="ml-1 text-[12px] text-white">1:1000</span>
          <Caret className="text-white" />
        </Cell>
        <div className="flex -space-x-px">
          <Cell width="w-[41px]">
            <Status label="Workspace" w={12}>
              <circle cx="6" cy="9" r="3.500" strokeWidth="3" />
              <circle cx="6" cy="9" r="5.300" strokeDasharray="2 2.160" strokeWidth="1.500" />
            </Status>
            <Caret className="text-white" />
          </Cell>
          <Cell width="w-[26px]">
            <Status label="Annotation monitor" w={14}>
              <path d="M7 2v14M0 9h14" strokeWidth="1.500" />
            </Status>
          </Cell>
        </div>
        <Cell width="w-[26px]">
          <Status label="Units" w={15}>
            <path d="M.5 1.500h6v6h-6zM7 11l3.500 5.500H4z" />
            <circle cx="12" cy="8" r="3" />
          </Status>
        </Cell>
        <Cell width="w-[26px]">
          <Status label="Hardware acceleration">
            <circle cx="9" cy="9" r="8" fill="#0a4a94" stroke="#2f8dff" strokeWidth="1.500" />
            <path d="M8 11l5-4M8 11q0 1 1.500 0" stroke="#4fb0ff" strokeWidth="1.500" />
          </Status>
        </Cell>
        <Cell width="w-[70px]">
          <Status label="Trusted file" w={16}>
            <rect x="1" y="3" width="12" height="11" fill="#e8e4c8" stroke="#222" />
            <rect x="7" y="6" width="6" height="5" fill="#3e66a0" stroke="none" />
            <path d="M2 11h8v4H2z" fill="#ffd400" stroke="none" />
            <path d="M1 4h5M3.500 1v5" stroke="#fff" />
            <path d="M7 13l3 3 6-6" stroke="#20b020" strokeWidth="2.500" />
          </Status>
          <Status label="Toolbox" w={15}>
            <path d="M1 5h4V3h3v2h6v10H1zM6 9V5M10 2v6h4" stroke="#f0641c" strokeWidth="1.300" />
          </Status>
          <Status label="Unreconciled layers" w={15}>
            <path d="M4 4h8l-3 2.500H1zM4 8h7M1 11h7M1 14h5M1 8h3" />
            <path d="M10.500 8l4.500 7.500H6z" fill="#f0641c" stroke="#f0641c" />
            <path d="M10.500 10v4" stroke="#fff" />
          </Status>
        </Cell>
        <Cell width="w-[50px]">
          <Status label="Clean screen" w={16}>
            <path d="M.5 3.500h15v11H.5zM3 12l3-3M13 6l-3 3M3 9v3h3M10 6h3v3" strokeWidth="1.200" />
          </Status>
          <Status label="Customization" w={15}>
            <path d="M0 4h15M0 9h15M0 14h15" strokeWidth="1.500" />
          </Status>
        </Cell>
      </div>
    </footer>
  );
}

function Defs() {
  return (
    <svg width="0" height="0" className="absolute" aria-hidden="true">
      <defs>
        <linearGradient id="sheen" x2="0" y2="1">
          <stop stopColor="#cfd3dc" />
          <stop offset="1" stopColor="#fafafa" />
        </linearGradient>
        <linearGradient id="tabOn" x2="0" y2="1">
          <stop stopColor="#8e8e8e" />
          <stop offset="1" stopColor="#626262" />
        </linearGradient>
        <linearGradient id="tabOff" x2="0" y2="1">
          <stop stopColor="#606060" />
          <stop offset="1" stopColor="#484848" />
        </linearGradient>
        <linearGradient id="tabOff2" x2="0" y2="1">
          <stop stopColor="#5a5a5a" />
          <stop offset="1" stopColor="#8e8e8e" />
        </linearGradient>
        <linearGradient id="logo" x2="0" y2="1">
          <stop stopColor="#f0301c" />
          <stop offset="1" stopColor="#9c0f12" />
        </linearGradient>
        <pattern id="rubble" width="23" height="13" patternUnits="userSpaceOnUse" patternTransform="translate(0 2)">
          <g fill="none" stroke={DIM}>
            <circle cx="17" cy="6" r="5" />
            <circle cx="6" cy="5" r="3" />
            <path d="M0 2l4 0M9 3l4-3M8 8l4 5M0 10l5-2 2 5M10 6l3 4M3 13l-3-5" />
          </g>
        </pattern>
        <pattern id="gravel" width="13" height="13" patternUnits="userSpaceOnUse" patternTransform="translate(0 6)">
          <g fill="none" stroke={DIM} strokeWidth="1.400">
            <circle cx="4" cy="4" r="2.500" />
            <path d="M4 13l1-4 4-1 3 2v3M6 5l4-4 3 3-3 3-3-1M0 7l3 1 1 2-3 2" />
          </g>
        </pattern>
      </defs>
    </svg>
  );
}

export default function App() {
  return (
    <div className="relative flex h-screen min-w-[1680px] flex-col overflow-hidden bg-[#383838] font-['Open_Sans','Noto_Sans',sans-serif] text-[11px] leading-4 text-[#f0f0f0]">
      <Defs />
      <TitleBar />
      <RibbonTabs />
      <button
        type="button"
        aria-label="Application menu"
        className="absolute top-0 left-0 flex h-[41px] w-[41px] items-center border border-black bg-linear-to-b from-[#a8a8a8] to-[#666] pl-1 text-[#333]"
      >
        <svg width="24" height="26" viewBox="0 0 24 26" aria-hidden="true">
          <path d="M9 1h5l9 24-6-1-2-4H8l-2 4-6 1z" fill="url(#logo)" />
          <path d="M12 10l4 7-4 1-6 4 3-8z" fill="#8a0f12" />
          <path d="M9 1l3 9-8 9-4 6z" fill="#dd3428" />
        </svg>
        <Caret />
      </button>
      <Ribbon />
      <div className="flex h-[29px] shrink-0 border-b-4 border-[#5d5d5d] pl-6">
        <FileTab name="Start" width={124} />
        <FileTab name="_1 SEAWALL*" width={124} closable />
        <FileTab name="_1 FC TYPICAL*" width={122} active closable />
        <button type="button" aria-label="New drawing" className="ml-[7px] pt-[3px]">
          <svg width="22" height="16" viewBox="0 0 22 16" aria-hidden="true">
            <path d="M1 1h13q6 2 7 14H7Q1 13 1 1z" fill="#505050" stroke="#666" />
            <path d="M11 4v8M7 8h8" stroke="#c8c8c8" strokeWidth="2" />
          </svg>
        </button>
      </div>
      <ModelSpace />
      <BottomBar />
    </div>
  );
}
